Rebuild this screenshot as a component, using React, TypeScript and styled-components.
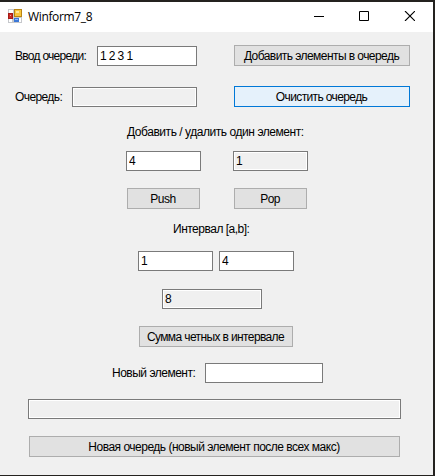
import React from "react";
import styled, { createGlobalStyle } from "styled-components";

const GlobalStyle = createGlobalStyle`
  * { box-sizing: border-box; }
  body { margin: 0; background: #24221f; overflow: hidden; }
`;

const Window = styled.main`
  width: 435px;
  height: 476px;
  display: flex;
  flex-direction: column;
  border: solid #24221f;
  border-width: 2px 2px 1px 0;
  background: #f0f0f0;
  color: #000;
  font: 12px/14px "Liberation Sans", Arial, sans-serif;
`;

const TitleBar = styled.header`
  height: 30px;
  flex: none;
  display: flex;
  align-items: center;
  padding: 0 0 2px 8px;
  background: #fff;
`;

const Title = styled.h1`
  margin: 2px auto 0 6px;
  font: 12px/16px "Open Sans", "Noto Sans", sans-serif;
  letter-spacing: -0.35px;
`;

const CaptionButton = styled.button`
  width: 45px;
  height: 28px;
  padding: 0;
  border: 0;
  background: none;
  display: grid;
  place-items: center;
`;

const CaptionButtons = styled.div`
  display: flex;
  margin-right: 2px;
`;

const Form = styled.div`
  display: flex;
  flex-direction: column;
`;

const Row = styled.div<{ $top: number; $left: number }>`
  display: flex;
  align-items: flex-start;
  margin-top: ${(p) => p.$top}px;
  padding-left: ${(p) => p.$left}px;
`;

const Label = styled.label<{ $w: number; $ls?: number; $top?: number }>`
  width: ${(p) => p.$w}px;
  flex: none;
  height: 14px;
  margin-top: ${(p) => p.$top ?? 0}px;
  white-space: nowrap;
  letter-spacing: ${(p) => p.$ls ?? -0.5}px;
`;

const Field = styled.input<{ $w: number; $gap?: number; $top?: number }>`
  width: ${(p) => p.$w}px;
  height: 20px;
  flex: none;
  margin: ${(p) => p.$top ?? 0}px ${(p) => p.$gap ?? 0}px 0 0;
  padding: 0 0 0 2px;
  border: 1px solid #7a7a7a;
  border-radius: 0;
  outline: 0;
  background: #fff;
  color: #000;
  font: inherit;
  letter-spacing: -0.6px;
  &:read-only {
    background: #f0f0f0;
    box-shadow: inset 0 0 0 1px #fff;
  }
`;

const Button = styled.button<{ $w: number; $ls?: number; $gap?: number; $hot?: boolean }>`
  width: ${(p) => p.$w}px;
  height: 21px;
  flex: none;
  margin: 0 ${(p) => p.$gap ?? 0}px 0 0;
  padding: 1px 1px 0 0;
  border: 1px solid ${(p) => (p.$hot ? "#0078d7" : "#adadad")};
  background: ${(p) => (p.$hot ? "#e5f1fb" : "#e1e1e1")};
  color: #000;
  font: inherit;
  white-space: nowrap;
  letter-spacing: ${(p) => p.$ls ?? -0.5}px;
`;

const FormIcon = () => (
  <svg width="14" height="14" viewBox="0 0 14 14" shapeRendering="crispEdges">
    <path d="M0 0h14v14H0z" fill="#c6c8cc" />
    <path d="M1 1h4v3H1zM1 10h3v3H1zM11 9h2v4h-2z" fill="#fff" />
    <path d="M0 4h5v6H0z" fill="#a51b16" />
    <path d="M1 5h3v4H1z" fill="#c92b24" />
    <path d="M2 6h1v1H2z" fill="#f7a597" />
    <path d="M6 0h8v8H6z" fill="#b98514" />
    <path d="M7 1h6v6H7z" fill="#f9c63d" />
    <path d="M8 2h3v2H8z" fill="#ffe89a" />
    <path d="M6 9h5v4H6z" fill="#3c78d8" />
    <path d="M7 10h3v1H7z" fill="#8fbcff" />
  </svg>
);

export default function App() {
  return (
    <>
      <GlobalStyle />
      <Window>
        <TitleBar>
          <FormIcon />
          <Title>Winform7_8</Title>
          <CaptionButtons>
            <CaptionButton aria-label="Свернуть">
              <svg width="10" height="10" shapeRendering="crispEdges"><path d="M0 5h10v1H0z" /></svg>
            </CaptionButton>
            <CaptionButton aria-label="Развернуть">
              <svg width="10" height="10"><path d="M.5.5h9v9h-9z" fill="none" stroke="#000" /></svg>
            </CaptionButton>
            <CaptionButton aria-label="Закрыть">
              <svg width="12" height="10"><path d="M2 0l10 10M12 0L2 10" fill="none" stroke="#000" strokeWidth="1.1" /></svg>
            </CaptionButton>
          </CaptionButtons>
        </TitleBar>
        <Form>
          <Row $top={13} $left={15}>
            <Label $w={82} $top={4} $ls={-0.72}>Ввод очереди:</Label>
            <Field $w={100} $gap={37} $top={1} defaultValue="1 2 3 1" />
            <Button $w={176} $ls={-0.56}>Добавить элементы в очередь</Button>
          </Row>
          <Row $top={20} $left={15}>
            <Label $w={57} $top={4} $ls={-0.6}>Очередь:</Label>
            <Field $w={125} $gap={37} $top={1} readOnly />
            <Button $w={176} $hot $ls={-0.62}>Очистить очередь</Button>
          </Row>
          <Row $top={18} $left={127}>
            <Label $w={180} $ls={-0.45}>Добавить / удалить один элемент:</Label>
          </Row>
          <Row $top={12} $left={126}>
            <Field $w={75} $gap={32} defaultValue="4" />
            <Field $w={75} defaultValue="1" readOnly />
          </Row>
          <Row $top={17} $left={127}>
            <Button $w={73} $gap={34}>Push</Button>
            <Button $w={73} $ls={-0.7}>Pop</Button>
          </Row>
          <Row $top={13} $left={173}>
            <Label $w={80}>Интервал [a,b]:</Label>
          </Row>
          <Row $top={15} $left={138}>
            <Field $w={75} $gap={6} defaultValue="1" />
            <Field $w={75} defaultValue="4" />
          </Row>
          <Row $top={18} $left={162}>
            <Field $w={100} defaultValue="8" readOnly />
          </Row>
          <Row $top={17} $left={139}>
            <Button $w={154} $ls={-0.62}>Сумма четных в интервале</Button>
          </Row>
          <Row $top={16} $left={112}>
            <Label $w={93} $top={3}>Новый элемент:</Label>
            <Field $w={118} />
          </Row>
          <Row $top={16} $left={28}>
            <Field $w={373} readOnly />
          </Row>
          <Row $top={17} $left={29}>
            <Button $w={371}>Новая очередь (новый элемент после всех макс)</Button>
          </Row>
        </Form>
      </Window>
    </>
  );
}
